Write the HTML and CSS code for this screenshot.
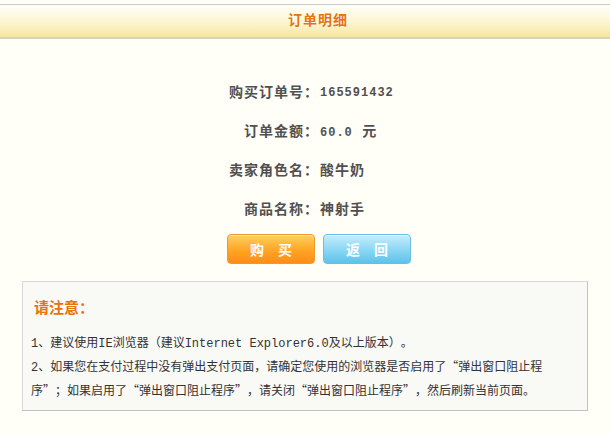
FILE: index.html
```html
<!DOCTYPE html>
<html lang="zh-CN">
<head>
  <meta charset="UTF-8">
  <title>订单明细</title>
  <link rel="stylesheet" href="styles.css">
</head>
<body>
  <div class="title-bar">订单明细</div>

  <div class="order-info">
    <div class="row"><span class="label">购买订单号：</span><span class="value num">165591432</span></div>
    <div class="row"><span class="label">订单金额：</span><span class="value"><span class="num">60.0</span> 元</span></div>
    <div class="row"><span class="label">卖家角色名：</span><span class="value">酸牛奶</span></div>
    <div class="row"><span class="label">商品名称：</span><span class="value">神射手</span></div>
  </div>

  <div class="actions">
    <button class="btn buy">购买</button>
    <button class="btn back">返回</button>
  </div>

  <div class="notice">
    <h3>请注意：</h3>
    <p><span class="en">1</span>、建议使用<span class="en">IE</span>浏览器（建议<span class="en">Internet Explorer6.0</span>及以上版本）。</p>
    <p><span class="en">2</span>、如果您在支付过程中没有弹出支付页面，请确定您使用的浏览器是否启用了“弹出窗口阻止程序”；如果启用了“弹出窗口阻止程序”，请关闭“弹出窗口阻止程序”，然后刷新当前页面。</p>
  </div>
</body>
</html>
```

FILE: styles.css
```css
body {
  margin: 0;
  background-color: #fffef7;
  font-family: "Liberation Mono", "Noto Sans CJK SC", monospace;
  color: #333;
}
.title-bar {
  margin-top: 4px;
  height: 32px;
  line-height: 32px;
  padding-left: 26px;
  border-top: 1px solid #cbcbcb;
  border-bottom: 2px solid #d6d3c2;
  background: linear-gradient(#fffffb, #fdf6d4 50%, #f7e6a0);
  text-align: center;
  font-size: 14px;
  font-weight: bold;
  letter-spacing: 1px;
  color: #e5740f;
  text-shadow: 0 0 2px #fff;
}
.order-info {
  margin-top: 35px;
}
.row {
  display: flex;
  height: 39px;
  line-height: 39px;
  font-size: 14px;
  font-weight: bold;
  letter-spacing: 1px;
  color: #505050;
}
.label {
  width: 319px;
  text-align: right;
}
.value {
  padding-left: 1px;
}
.num {
  font-size: 12px;
}
.actions {
  display: flex;
  justify-content: center;
  gap: 8px;
  padding-left: 28px;
  margin-top: 4px;
}
.btn {
  width: 88px;
  height: 30px;
  border-radius: 4px;
  font-family: "Noto Sans CJK SC", sans-serif;
  font-size: 14px;
  font-weight: bold;
  color: #fff;
  letter-spacing: 14px;
  padding: 0 0 0 14px;
  cursor: pointer;
}
.buy {
  border: 1px solid #eb9a2c;
  background: linear-gradient(#ffd060, #ffa526 55%, #ff8c16);
  box-shadow: inset 0 1px 0 #ffe6a0;
}
.back {
  border: 1px solid #6cbde0;
  background: linear-gradient(#c4efff, #8fd8f4 50%, #5cc3ea);
  box-shadow: inset 0 1px 0 #e4f8ff;
}
.notice {
  margin: 17px 22px 0 22px;
  padding: 17px 30px 10px 8px;
  background-color: #f9f9f6;
  border: 1px solid #d8d8d8;
  border-right-color: #c2c2c2;
  border-bottom-color: #c2c2c2;
}
.notice h3 {
  margin: 0 0 11px 3px;
  font-size: 15px;
  line-height: 21px;
  color: #e5740f;
}
.notice p {
  margin: 0;
  font-family: "Noto Sans CJK SC", sans-serif;
  font-size: 12px;
  line-height: 21px;
  color: #333;
  font-feature-settings: "fwid";
  text-spacing-trim: space-all;
}
.notice .en {
  font-family: "Liberation Mono", monospace;
  font-feature-settings: normal;
}
```
